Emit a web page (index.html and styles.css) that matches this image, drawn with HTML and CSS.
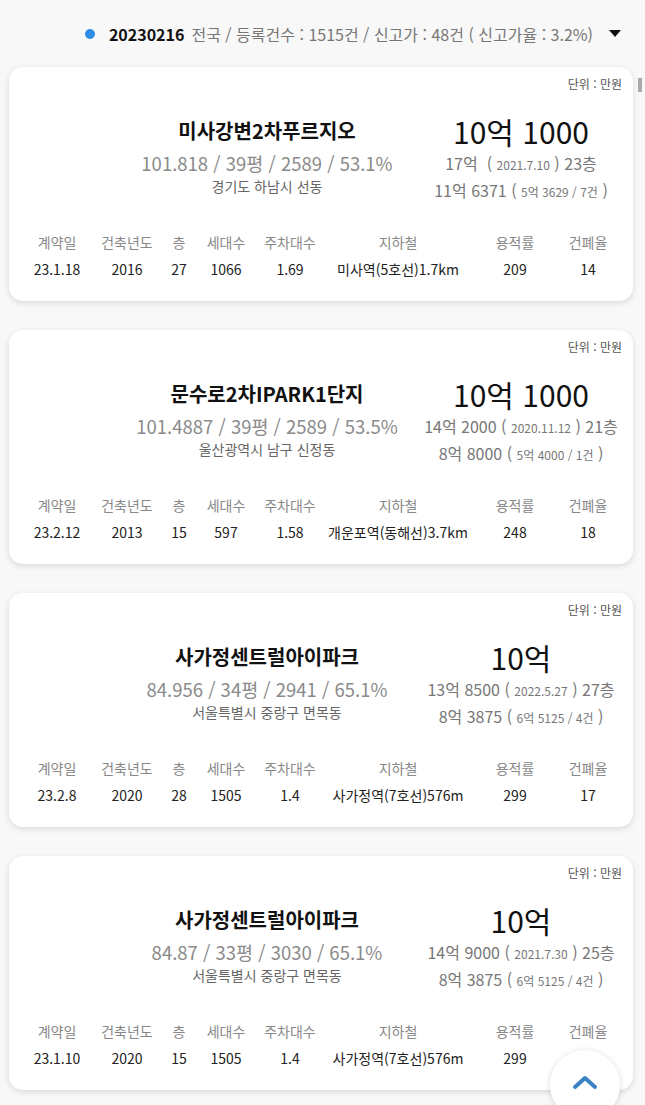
FILE: index.html
```html
<!DOCTYPE html>
<html lang="ko">
<head>
  <meta charset="UTF-8">
  <meta name="viewport" content="width=device-width, initial-scale=1.0">
  <title>신고가 목록</title>
  <link rel="stylesheet" href="styles.css">
</head>
<body>

<div class="page">
  <!-- Summary Header -->
  <div class="summary">
    <span class="summary-dot"></span>
    <span class="summary-date">20230216</span>
    <span class="summary-text">전국 / 등록건수 : 1515건 / 신고가 : 48건 ( 신고가율 : 3.2%)</span>
    <span class="summary-caret"></span>
  </div>

  <!-- Deal List -->
  <div class="deal-list" id="dealList"></div>
</div>

<div class="scroll-thumb"></div>

<button class="top-button" aria-label="맨 위로">
  <svg width="26" height="16" viewBox="0 0 26 16"><path d="M3 13 L13 4 L23 13" fill="none" stroke="#3b82c4" stroke-width="4" stroke-linecap="round" stroke-linejoin="round"/></svg>
</button>

<script>
  const deals = [
    {
      name: '미사강변2차푸르지오', spec: '101.818 / 39평 / 2589 / 53.1%', addr: '경기도 하남시 선동',
      price: '10억 1000', prev: '17억&nbsp; (', prevDate: '2021.7.10', prevFloor: ') 23층',
      avg: '11억 6371 (', avgSub: '5억 3629 / 7건',
      row: ['23.1.18', '2016', '27', '1066', '1.69', '미사역(5호선)1.7km', '209', '14']
    },
    {
      name: '문수로2차IPARK1단지', spec: '101.4887 / 39평 / 2589 / 53.5%', addr: '울산광역시 남구 신정동',
      price: '10억 1000', prev: '14억 2000 (', prevDate: '2020.11.12', prevFloor: ') 21층',
      avg: '8억 8000 (', avgSub: '5억 4000 / 1건',
      row: ['23.2.12', '2013', '15', '597', '1.58', '개운포역(동해선)3.7km', '248', '18']
    },
    {
      name: '사가정센트럴아이파크', spec: '84.956 / 34평 / 2941 / 65.1%', addr: '서울특별시 중랑구 면목동',
      price: '10억', prev: '13억 8500 (', prevDate: '2022.5.27', prevFloor: ') 27층',
      avg: '8억 3875 (', avgSub: '6억 5125 / 4건',
      row: ['23.2.8', '2020', '28', '1505', '1.4', '사가정역(7호선)576m', '299', '17']
    },
    {
      name: '사가정센트럴아이파크', spec: '84.87 / 33평 / 3030 / 65.1%', addr: '서울특별시 중랑구 면목동',
      price: '10억', prev: '14억 9000 (', prevDate: '2021.7.30', prevFloor: ') 25층',
      avg: '8억 3875 (', avgSub: '6억 5125 / 4건',
      row: ['23.1.10', '2020', '15', '1505', '1.4', '사가정역(7호선)576m', '299', '17']
    }
  ];
  const labels = ['계약일', '건축년도', '층', '세대수', '주차대수', '지하철', '용적률', '건폐율'];

  const dealList = document.getElementById('dealList');

  deals.forEach(deal => {
    const card = document.createElement('div');
    card.className = 'deal-card';
    card.innerHTML = `
      <div class="unit">단위 : 만원</div>
      <div class="deal-top">
        <div class="deal-info">
          <div class="deal-name">${deal.name}</div>
          <div class="deal-spec">${deal.spec}</div>
          <div class="deal-addr">${deal.addr}</div>
        </div>
        <div class="deal-price">
          <div class="price-main">${deal.price}</div>
          <div class="price-prev">${deal.prev} <small>${deal.prevDate}</small> ${deal.prevFloor}</div>
          <div class="price-avg">${deal.avg} <small>${deal.avgSub}</small> )</div>
        </div>
      </div>
      <div class="deal-table">
        ${labels.map(l => `<div class="th">${l}</div>`).join('')}
        ${deal.row.map(v => `<div class="td">${v}</div>`).join('')}
      </div>`;
    dealList.appendChild(card);
  });
</script>

</body>
</html>
```

FILE: styles.css
```css
/* Page */
body {
  margin: 0;
  padding: 0;
  background-color: #f8f8f8;
  font-family: "Noto Sans CJK KR", "Noto Sans", sans-serif;
  color: #222;
  overflow: hidden;
}
.page {
  width: 645px;
}

/* Summary Header */
.summary {
  height: 67px;
  display: flex;
  align-items: center;
  justify-content: flex-end;
  padding-right: 24px;
  white-space: nowrap;
}
.summary-dot {
  width: 10px;
  height: 10px;
  border-radius: 50%;
  background-color: #2b8de3;
  margin-right: 14px;
}
.summary-date {
  font-size: 16px;
  font-weight: bold;
  color: #111;
  margin-right: 7px;
}
.summary-text {
  font-size: 16px;
  color: #777;
}
.summary-caret {
  width: 0;
  height: 0;
  border-left: 6px solid transparent;
  border-right: 6px solid transparent;
  border-top: 7px solid #111;
  margin-left: 16px;
}

/* Cards */
.deal-list {
  padding: 0 12px 0 9px;
}
.deal-card {
  background-color: white;
  border-radius: 14px;
  box-shadow: 0 2px 6px rgba(0, 0, 0, 0.13);
  margin-bottom: 29px;
  padding: 8px 0 17px;
  height: 209px;
}
.unit {
  text-align: right;
  font-size: 12px;
  line-height: 18px;
  color: #555;
  padding-right: 11px;
}
.deal-top {
  display: grid;
  grid-template-columns: 1fr 214px;
  margin-top: 18px;
  padding-right: 5px;
  white-space: nowrap;
  text-align: center;
}
.deal-info {
  padding-left: 111px;
}
.deal-name {
  font-size: 20px;
  font-weight: bold;
  line-height: 40px;
  color: #111;
}
.deal-spec {
  font-size: 18.5px;
  line-height: 24px;
  color: #8a8a8a;
}
.deal-addr {
  font-size: 14px;
  line-height: 22px;
  color: #666;
}
.price-main {
  font-size: 30px;
  line-height: 40px;
  color: #111;
}
.price-prev, .price-avg {
  font-size: 16px;
  line-height: 24px;
  color: #777;
}
.price-avg {
  line-height: 26px;
}
.deal-price small {
  font-size: 12px;
}

/* Table */
.deal-table {
  display: grid;
  grid-template-columns: 70px 70px 34px 60px 68px 148px 86px 60px;
  margin-top: 25px;
  padding-left: 13px;
  text-align: center;
  white-space: nowrap;
  font-size: 14px;
}
.deal-table .th {
  line-height: 24px;
  color: #888;
}
.deal-table .td {
  line-height: 30px;
  color: #222;
}

/* Overlays */
.scroll-thumb {
  position: fixed;
  top: 78px;
  right: 3px;
  width: 4px;
  height: 14px;
  background-color: #aaa;
}
.top-button {
  position: fixed;
  right: 25px;
  bottom: -15px;
  width: 70px;
  height: 70px;
  border-radius: 50%;
  border: none;
  background-color: white;
  box-shadow: 0 1px 6px rgba(0, 0, 0, 0.15);
  padding: 0 0 4px;
  cursor: pointer;
}
```
